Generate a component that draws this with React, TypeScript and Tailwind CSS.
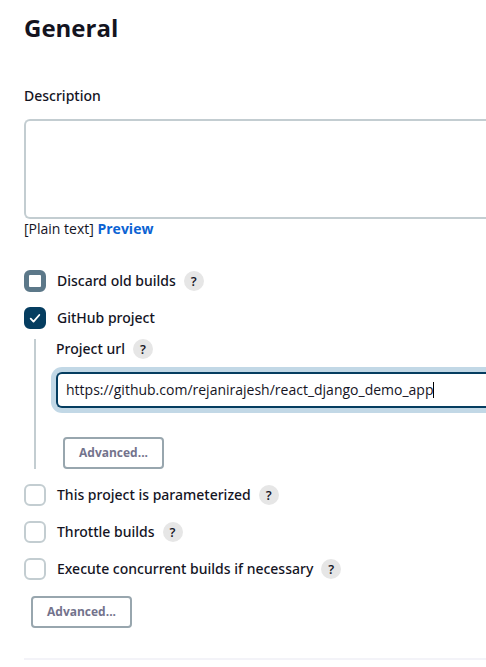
import { useState } from "react";

function HelpButton({ topic }: { topic: string }) {
  return (
    <button
      type="button"
      aria-label={`Help for ${topic}`}
      className="flex size-5 shrink-0 items-center justify-center rounded-full bg-[#e6e6e6] text-[13px] leading-5 font-semibold text-[#14141f]"
    >
      ?
    </button>
  );
}

function AdvancedButton() {
  return (
    <button
      type="button"
      className="h-8 w-[101px] rounded border-2 border-[#98a6ae] bg-white text-xs font-bold text-[#73738c]"
    >
      Advanced...
    </button>
  );
}

type OptionProps = {
  id: string;
  label: string;
  help?: boolean;
  pressed?: boolean;
  checked: boolean;
  onToggle: (id: string) => void;
};

function Option({ id, label, help = true, pressed = false, checked, onToggle }: OptionProps) {
  return (
    <div className="flex h-[22px] items-center gap-2">
      <label
        htmlFor={id}
        className="flex items-center gap-[11px] font-['Noto_Sans',sans-serif] font-medium whitespace-nowrap"
      >
        <span className="relative size-[22px] shrink-0">
          <input
            id={id}
            type="checkbox"
            checked={checked}
            onChange={() => onToggle(id)}
            className={
              pressed
                ? "block size-[22px] appearance-none rounded-md border-5 border-[#5c7889] bg-white"
                : "block size-[22px] appearance-none rounded-md border-2 border-[#c3cdd1] bg-white checked:border-[#053d60] checked:bg-[#053d60]"
            }
          />
          {checked && (
            <svg
              viewBox="0 0 22 22"
              className="pointer-events-none absolute inset-0 size-[22px]"
              fill="none"
              stroke="white"
              strokeWidth="1.8"
              strokeLinecap="round"
              strokeLinejoin="round"
            >
              <path d="M6.7 11.7l2.8 2.9 5.8-6.6" />
            </svg>
          )}
        </span>
        {label}
      </label>
      {help && <HelpButton topic={label} />}
    </div>
  );
}

export default function App() {
  const [description, setDescription] = useState("");
  const [projectUrl, setProjectUrl] = useState("https://github.com/rejanirajesh/react_django_demo_app");
  const [enabled, setEnabled] = useState<Record<string, boolean>>({ github: true });

  function toggle(id: string) {
    setEnabled((prev) => ({ ...prev, [id]: !prev[id] }));
  }

  return (
    <main className="min-h-screen overflow-x-hidden bg-white pt-3 pb-2 pl-6 font-['Open_Sans',sans-serif] text-sm leading-5 text-[#14141f]">
      <h1 className="text-2xl leading-8 font-bold">General</h1>

      {/* Description */}
      <div className="mt-[42px]">
        <label htmlFor="description" className="block font-['Noto_Sans',sans-serif] font-medium">
          Description
        </label>
        <textarea
          id="description"
          value={description}
          onChange={(e) => setDescription(e.target.value)}
          className="mt-[13px] block h-[100px] w-full resize-none rounded-l-md border-2 border-r-0 border-[#c3cdd1] bg-white p-2 outline-none"
        />
        <p>
          [Plain text]{" "}
          <a href="#preview" className="font-bold text-[#0b63d3]">
            Preview
          </a>
        </p>
      </div>

      {/* Build options */}
      <div className="mt-[31px] flex flex-col gap-[15px]">
        <Option id="discard" label="Discard old builds" pressed checked={false} onToggle={toggle} />
        <Option id="github" label="GitHub project" help={false} checked={!!enabled.github} onToggle={toggle} />
      </div>

      <div className="mt-2.5 ml-2.5 border-l-2 border-[#c3cdd1] pl-5">
        <div className="flex items-center gap-2">
          <label htmlFor="project-url" className="font-['Noto_Sans',sans-serif] font-medium">
            Project url
          </label>
          <HelpButton topic="Project url" />
        </div>
        <div className="mt-[13px] flex h-9 items-center rounded-l-md border-2 border-r-0 border-[#053d60] bg-white pl-2 shadow-[0_0_0_5px_#c2d8e6]">
          <input
            id="project-url"
            type="text"
            value={projectUrl}
            onChange={(e) => setProjectUrl(e.target.value)}
            className="field-sizing-content caret-transparent outline-none"
          />
          <span className="h-4 w-px bg-black" />
        </div>
        <div className="mt-[29px] pl-[7px]">
          <AdvancedButton />
        </div>
      </div>

      <div className="mt-[15px] flex flex-col gap-[15px]">
        <Option id="parameterized" label="This project is parameterized" checked={!!enabled.parameterized} onToggle={toggle} />
        <Option id="throttle" label="Throttle builds" checked={!!enabled.throttle} onToggle={toggle} />
        <Option id="concurrent" label="Execute concurrent builds if necessary" checked={!!enabled.concurrent} onToggle={toggle} />
      </div>

      <div className="mt-4 pl-[7px]">
        <AdvancedButton />
      </div>

      <hr className="mt-[30px] border-t-2 border-[#f3f3f8]" />
    </main>
  );
}
